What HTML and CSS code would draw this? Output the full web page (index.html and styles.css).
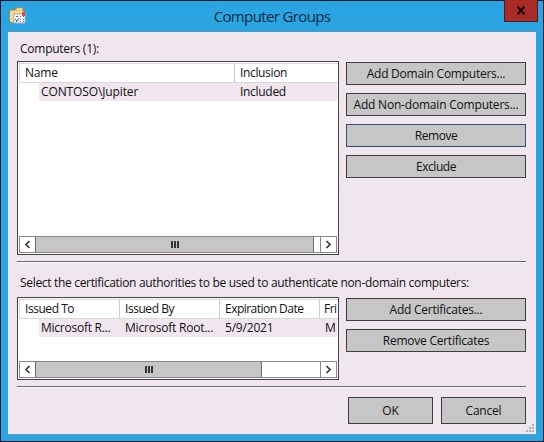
FILE: index.html
```html
<!DOCTYPE html>
<html lang="en">
<head>
<meta charset="utf-8">
<title>Computer Groups</title>
<link rel="stylesheet" href="styles.css">
</head>
<body>
<div class="window">
  <header class="titlebar">
    <svg class="app-icon" width="18" height="18" viewBox="0 0 18 18">
      <path d="M1 3h5l1-2h7v3h1v11H1z" fill="#efc66c" stroke="#b98a39"/>
      <path d="M2 5h12" stroke="#fff0b4"/><path d="M8 2h5" stroke="#fff4c8"/>
      <path d="M1 4l3 2v10l-3-2z" fill="#f5da91"/>
      <path d="M5 7h11v9H5z" fill="#fafaff" stroke="#a9b3c5"/>
      <path d="M13 5h3v4h-3z" fill="#d94c41"/>
      <path d="M7 9.500h2m2 0h1m2 0h1M11 12.500h1m2 0h1M7 14.500h1m3 0h1m2 0h1" stroke="#626e85"/>
      <path d="M6 12l2 2 2-3" fill="none" stroke="#2b638d"/>
    </svg>
    <h1>Computer Groups</h1>
    <button class="close" aria-label="Close"><svg width="10" height="9" viewBox="0 0 10 9"><path d="M1.5 .5l7 8m0-8l-7 8" stroke="#26090c" stroke-width="2.2"/></svg></button>
  </header>
  <main class="client">
    <p class="label first-label"><span class="computers">Computers (1):</span></p>
    <section class="group">
      <div class="list computers-list">
        <div class="head"><span>Name</span><span class="inclusion">Inclusion</span></div>
        <div class="row"><span class="jupiter">CONTOSO\Jupiter</span><span class="included">Included</span></div>
        <div class="blank"></div>
        <div class="scroll"><i class="arrow"><svg width="7" height="9" viewBox="0 0 7 9"><path d="M5.5 1L2 4.5 5.5 8"/></svg></i><i class="thumb"><b></b></i><i class="track"></i><i class="arrow right"><svg width="7" height="9" viewBox="0 0 7 9"><path d="M1.5 1L5 4.5 1.5 8"/></svg></i></div>
      </div>
      <div class="buttons">
        <button><span class="add-domain">Add Domain Computers...</span></button>
        <button><span class="add-non-domain">Add Non-domain Computers...</span></button>
        <button class="focused"><span class="remove">Remove</span></button>
        <button><span class="exclude">Exclude</span></button>
      </div>
    </section>
    <div class="rule"></div>
    <p class="label second-label"><span class="authorities">Select the certification authorities to be used to authenticate non-domain computers:</span></p>
    <section class="group">
      <div class="list certificate-list">
        <div class="head"><span class="issued">Issued To</span><span class="issued">Issued By</span><span class="expiration">Expiration Date</span><span class="friendly">Fri</span></div>
        <div class="row"><span class="microsoft">Microsoft R...</span><span class="root">Microsoft Root...</span><span class="date">5/9/2021</span><span>M</span></div>
        <div class="blank"></div>
        <div class="scroll"><i class="arrow"><svg width="7" height="9" viewBox="0 0 7 9"><path d="M5.5 1L2 4.5 5.5 8"/></svg></i><i class="thumb"><b></b></i><i class="track"></i><i class="arrow right"><svg width="7" height="9" viewBox="0 0 7 9"><path d="M1.5 1L5 4.5 1.5 8"/></svg></i></div>
      </div>
      <div class="buttons cert-buttons">
        <button><span class="add-cert">Add Certificates...</span></button>
        <button><span class="remove-cert">Remove Certificates</span></button>
      </div>
    </section>
    <div class="rule last-rule"></div>
    <footer><button><span>OK</span></button><button><span>Cancel</span></button></footer>
    <svg class="grip" width="9" height="9" viewBox="0 0 9 9"><path d="M6 0h2v2H6zM3 3h2v2H3zM6 3h2v2H6zM0 6h2v2H0zM3 6h2v2H3zM6 6h2v2H6z" fill="#b3adb2"/></svg>
  </main>
</div>
</body>
</html>
```

FILE: styles.css
```css
* { box-sizing: border-box; }
body { margin: 0; overflow: hidden; font: 12px/17px "Open Sans", "Noto Sans", sans-serif; color: #111; letter-spacing: -.2px; }
button { font: inherit; color: inherit; letter-spacing: inherit; padding: 0; border: 1px solid #403c40; border-radius: 0; background: #c6c6c6; display: flex; align-items: center; justify-content: center; white-space: nowrap; }
.window { width: 544px; height: 442px; border: 1px solid #06192c; background: #2ba5e2; padding: 0 7px 6px; display: flex; flex-direction: column; }
.titlebar { height: 30px; flex: none; display: grid; grid-template-columns: 34px 1fr 34px; margin-right: -2px; }
.app-icon { margin: 6px 0 0 1px; }
h1 { margin: 4px 0 0; padding-right: 2px; font-size: 15px; line-height: 22px; font-weight: 400; text-align: center; color: #0d2b42; letter-spacing: -.63px; }
.close { width: 34px; height: 22px; border-color: #4c1b24; border-top: 0; margin-top: -1px; background: #a92c28; }
.client { position: relative; flex: 1; background: #f0e6ee; border-top: 1px solid #5c98bd; border-bottom: 1px solid #659bbb; padding: 0 10px 0 9px; }
.label { margin: 0; padding-left: 3px; white-space: nowrap; }
.first-label { height: 29px; padding-top: 8px; }
.computers { letter-spacing: -.25px; }
.authorities { letter-spacing: -.32px; }
.inclusion { letter-spacing: -.35px; }
.included { letter-spacing: -.3px; }
.jupiter { letter-spacing: -.12px; }
.issued, .remove, .exclude { letter-spacing: -.45px; }
.expiration { letter-spacing: -.53px; }
.microsoft { letter-spacing: -.25px; }
.add-domain, .add-cert, .remove-cert { letter-spacing: -.25px; }
.group { display: flex; gap: 7px; }
.list { width: 322px; border: 1px solid #484149; background: #fff; padding: 1px; display: flex; flex-direction: column; overflow: hidden; white-space: nowrap; }
.computers-list { height: 194px; }
.certificate-list { height: 83px; }
.head, .row { display: grid; }
.computers-list .head { grid-template-columns: 215px 1fr; }
.certificate-list .head { grid-template-columns: 100px 100px 100px 1fr; }
.head { border: 1px solid #ddd7dc; border-width: 1px 0 1px 1px; height: 20px; margin-right: -1px; }
.head span { padding-left: 5px; line-height: 18px; border-right: 1px solid #cdcbce; }
.head span:last-child { border-right: 0; }
.head .friendly { padding-left: 4px; letter-spacing: -.5px; }
.row { margin-left: 20px; background: #f0e6ee; line-height: 18px; padding-left: 2px; height: 18px; }
.computers-list .row { grid-template-columns: 199px 1fr; }
.certificate-list .row { grid-template-columns: 84px 100px 100px 1fr; }
.blank { flex: 1; }
.scroll { display: flex; height: 17px; flex: none; border: 1px solid #8b878c; }
.arrow { width: 15px; flex: none; display: flex; align-items: center; justify-content: center; }
.arrow svg { fill: none; stroke: #343238; stroke-width: 1.6; }
.thumb { width: 279px; flex: none; background: #c6c6c6; border: solid #716e73; border-width: 0 1px; display: flex; align-items: center; justify-content: center; }
.thumb b { width: 8px; height: 7px; background: repeating-linear-gradient(to right, #353238 0 2px, #c6c6c6 2px 3px); }
.certificate-list .thumb { width: 227px; }
.track { flex: 1; }
.arrow.right { width: 16px; border-left: 1px solid #8b878c; }
.buttons { display: flex; flex-direction: column; gap: 8px; width: 180px; padding-top: 1px; }
.buttons button { height: 23px; flex: none; }
.buttons .focused { border-color: #304a7c; }
.rule { height: 2px; margin-top: 6px; background: linear-gradient(#6e646f 50%, #fff 50%); }
.second-label { height: 34px; padding-top: 11px; }
footer { display: flex; justify-content: flex-end; gap: 8px; padding-top: 9px; }
footer button { width: 85px; height: 27px; }
.grip { position: absolute; right: 1px; bottom: 1px; }
```
